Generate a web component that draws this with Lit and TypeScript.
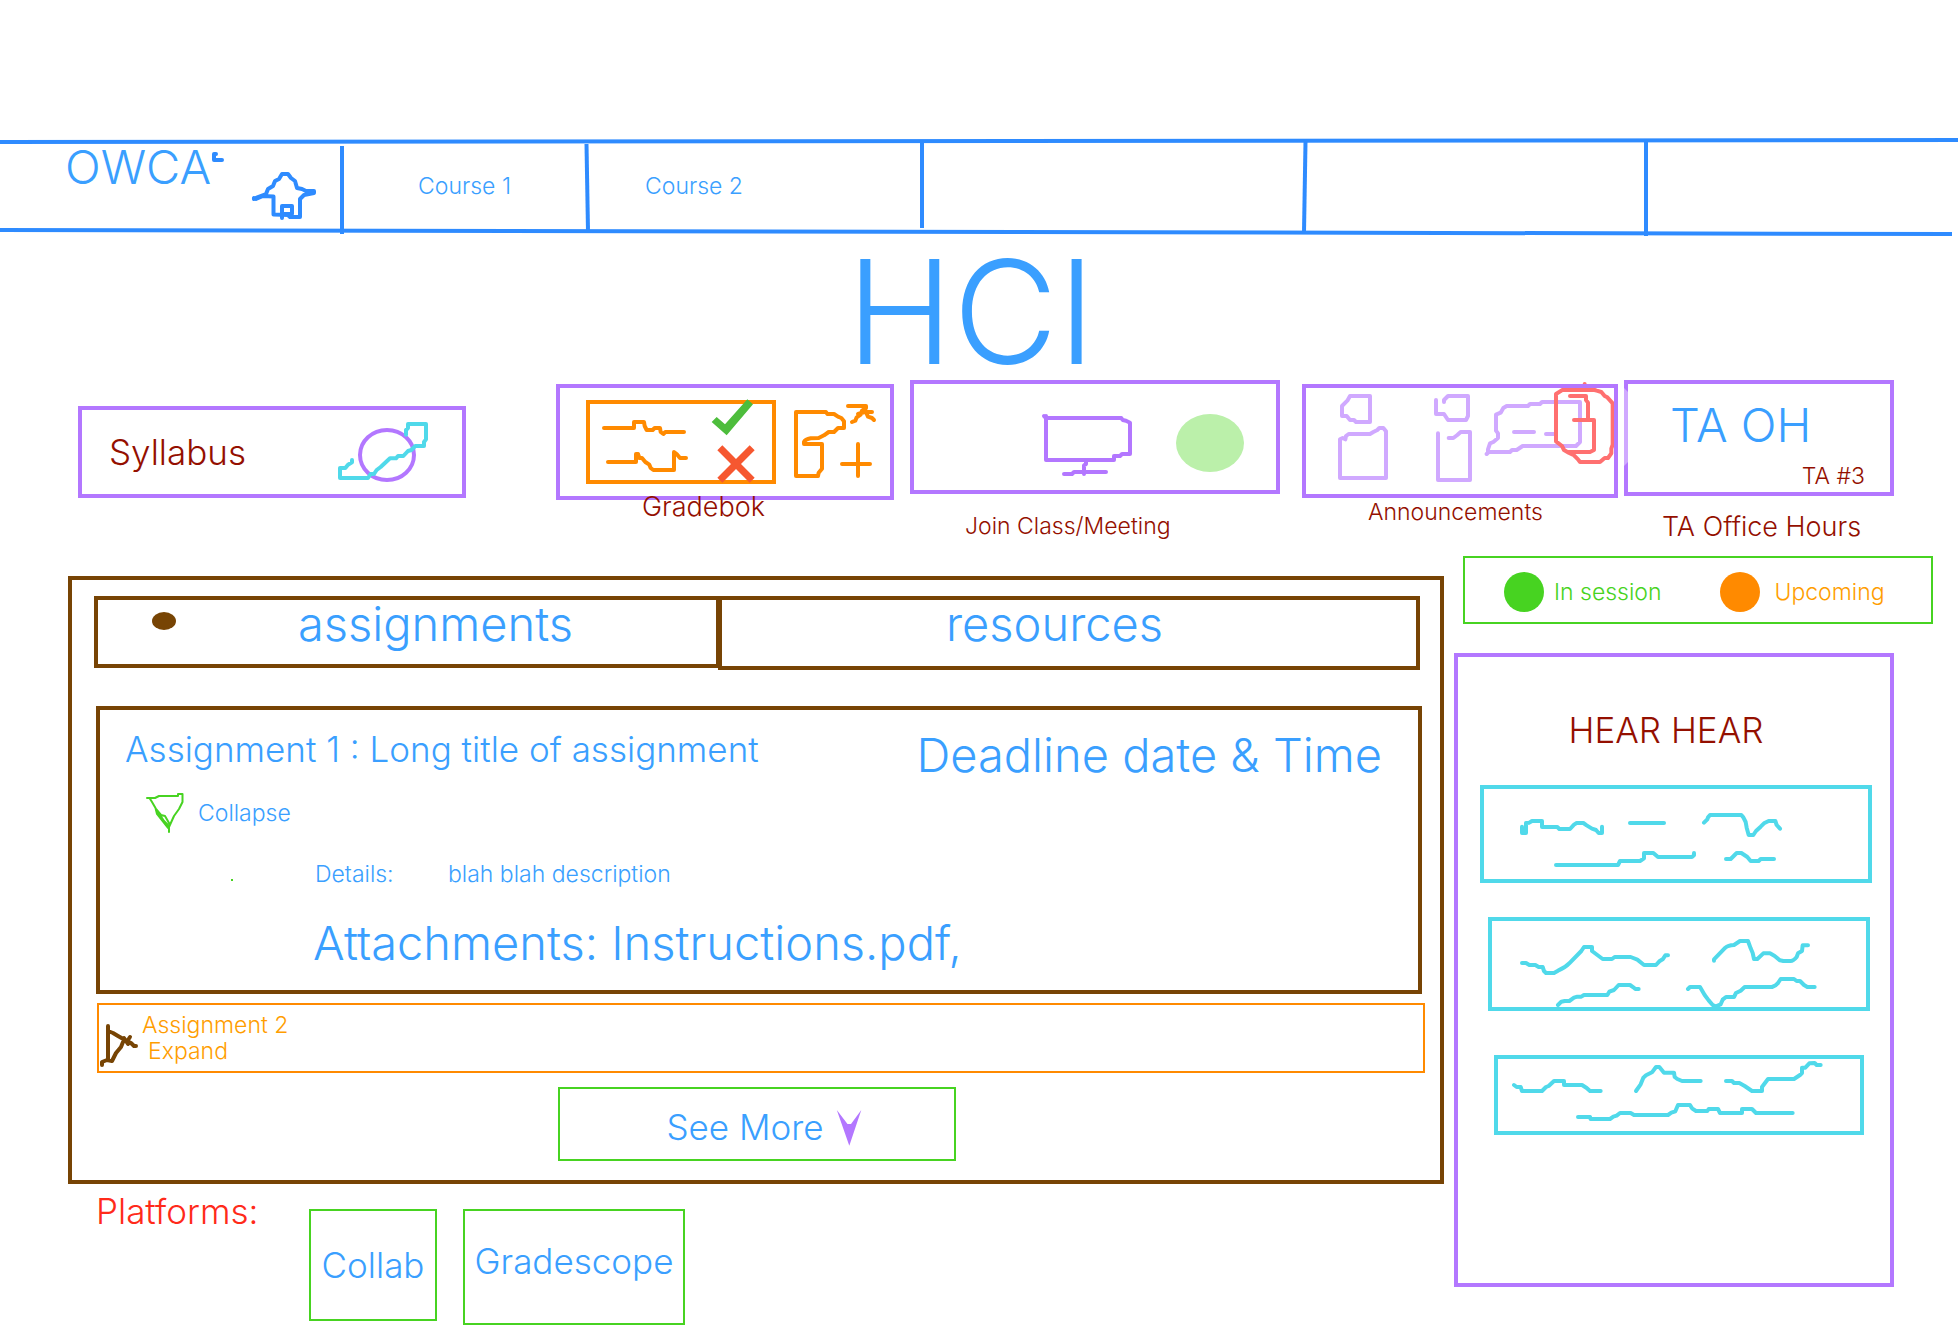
import { LitElement, html, css, svg } from 'lit';
import { customElement, state } from 'lit/decorators.js';

const notes = [
  {
    name: 'first',
    width: 384,
    height: 90,
    viewBox: '132 444 1152 270',
    paths: [
      'M246 557V576H258V546L268 545L276 540H306V558H352L358 564H390L402 551L410 546H430L440 553L456 563L468 567L476 576H486V557',
      'M570 546H672',
      'M792 545L802 535L804 529L810 522H904L910 529L917 543L920 560L926 582H940L948 570L962 557L972 547L986 540H1006L1010 552L1020 563',
      'M348 672H534L540 660H600L612 652V636H640L654 648H756L762 643V636',
      'M858 654H872L890 636H904L922 648L932 660H956L962 654H1002',
    ],
  },
  {
    name: 'second',
    width: 374,
    height: 86,
    viewBox: '156 840 1122 258',
    paths: [
      'M246 966H258L268 972H286L296 978H308L312 990L318 996H342L354 989Q376 980 390 965L424 930L432 918H456V930L472 942L488 954H516L524 948H572L592 956L612 972H648L658 961L668 955L676 943H684',
      'M822 959V955L856 920Q864 913 882 912L900 900H924L932 922L938 936L942 954H952L970 937H990L1004 945L1020 958L1030 960H1052Q1060 960 1070 948L1074 937L1086 930L1088 913H1104',
      'M354 1092L364 1082L374 1080H388L402 1070L412 1067H424L432 1062H502L508 1052L522 1047L536 1032H570L580 1039L586 1044H596',
      'M744 1044L750 1038H780L794 1062L806 1078L818 1092L828 1096L842 1090L848 1076L858 1068H882L888 1056L902 1049L914 1038H996Q1008 1034 1014 1026L1022 1014H1062L1070 1020H1080L1092 1032L1102 1038H1124',
    ],
  },
  {
    name: 'third',
    width: 362,
    height: 72,
    viewBox: '174 234 1086 216',
    paths: [
      'M222 312L230 318H242L246 330H306L318 318L326 315L342 300H372V312H426L440 321L450 330H482',
      'M588 330L602 310L610 290L618 283L636 274L648 258H658L672 275H702L704 288L712 294L726 300H782',
      'M858 300H876L882 306H898L914 315L936 330H966V318L984 294H1062L1080 282L1086 276V260H1096L1108 247L1124 246L1130 252H1142',
      'M414 408H450L452 414H510L520 407L530 404L540 396H572L582 402H684L694 395L706 391L714 372H750L756 382L768 390H802L806 384H834L840 396H906V384H936L948 396H1058',
    ],
  },
];

@customElement('app-root')
export class AppRoot extends LitElement {
  static styles = css`
    :host {
      display: block;
      background: #fff;
      color: #3a9fff;
      font: 300 23px/28px Inter, 'Liberation Sans', sans-serif;
      --blue: #2e8bff;
      --purple: #b377ff;
      --maroon: #940f00;
      --orange: #ff8a00;
      --green: #47d321;
      --brown: #774404;
      --cyan: #50d9ea;
    }
    * { box-sizing: border-box; }
    a { color: inherit; text-decoration: none; }
    button {
      font: inherit;
      color: inherit;
      background: none;
      border: 0;
      padding: 0;
      margin: 0;
      text-align: left;
      cursor: pointer;
    }
    svg {
      display: block;
      flex: none;
      fill: none;
      stroke-linecap: round;
      stroke-linejoin: round;
    }
    h1, h2, h3, p, ul { margin: 0; padding: 0; font-weight: 300; }
    ul { list-style: none; }

    .top { padding-top: 138px; }
    .nav {
      position: relative;
      display: grid;
      grid-template-columns: 342fr 245fr 334fr 384fr 341fr 312fr;
      height: 100px;
    }
    .rules {
      position: absolute;
      inset: 0;
      width: 100%;
      height: 100%;
      stroke: var(--blue);
      stroke-width: 4;
      stroke-linecap: butt;
      pointer-events: none;
    }
    .rules path { vector-effect: non-scaling-stroke; }
    .home {
      display: flex;
      justify-content: space-between;
      padding: 1px 20px 0 65px;
      font-size: 47px;
      line-height: 56px;
    }
    .home svg { margin: 11px 0 0 -8px; stroke: var(--blue); stroke-width: 4; }
    .course { padding-top: 34px; }
    .first { text-align: center; }
    .second { padding-left: 58px; }

    .title {
      margin-top: 8px;
      padding: 0 16px 2px 0;
      text-align: center;
      font-size: 144px;
      line-height: 132px;
    }

    .cards {
      display: flex;
      align-items: flex-start;
      padding: 0 64px 13px 78px;
      color: var(--maroon);
    }
    .tile { display: block; min-width: 0; }
    .box {
      position: relative;
      display: flex;
      justify-content: center;
      border: 4px solid var(--purple);
    }
    .box svg { stroke-width: 12; }
    .syllabus { flex: 388 1 0; margin-top: 26px; }
    .syllabus .box {
      justify-content: space-between;
      align-items: center;
      padding: 0 28px 0 27px;
      font-size: 35px;
      line-height: 40px;
    }
    .gradebook { flex: 338 1 0; margin: 4px 0 0 90px; }
    .gradebook .label { margin-top: -9px; padding-left: 86px; }
    .meeting { flex: 370 1 0; margin-left: 16px; }
    .meeting .label { margin-top: 18px; padding-left: 55px; }
    .news { flex: 316 1 0; margin: 4px 0 0 22px; }
    .news .label { padding-left: 66px; }
    .news svg { overflow: visible; }
    .office { flex: 270 1 0; margin-left: 6px; }
    .office .label { margin-top: 15px; padding-left: 38px; }
    .office .box { display: block; padding: 13px 25px 2px 42px; }
    .office .box::before {
      content: '';
      position: absolute;
      left: -4px;
      top: 4px;
      width: 4px;
      height: 78px;
      background: #d0a9ff;
      clip-path: polygon(0 0, 100% 4px, 100% 74px, 0 100%);
    }
    .label { position: relative; white-space: nowrap; }
    .large { font-size: 27px; line-height: 32px; }
    .oh { display: block; color: #3a9fff; font-size: 47px; line-height: 56px; }
    .ta { display: block; margin-top: 9px; text-align: right; }

    .body {
      display: grid;
      grid-template-columns: 1376fr 479fr;
      gap: 10px;
      align-items: start;
      padding: 0 25px 16px 68px;
    }
    .work {
      margin-top: 20px;
      padding: 16px 20px 19px 22px;
      border: 4px solid var(--brown);
    }
    .tabs {
      display: grid;
      grid-template-columns: 624fr 702fr;
      align-items: start;
    }
    .tab {
      display: flex;
      align-items: flex-start;
      border: 4px solid var(--brown);
      font-size: 47px;
      line-height: 48px;
    }
    .tab-a { gap: 122px; margin-right: -2px; padding: 0 0 16px 54px; }
    .tab-r { padding: 0 0 18px 224px; }
    .mark {
      width: 24px;
      height: 18px;
      margin-top: 12px;
      border-radius: 50%;
      background: var(--brown);
    }
    .assignment {
      margin: 36px -2px 0 2px;
      padding: 17px 36px 19px 25px;
      border: 4px solid var(--brown);
    }
    .heading { display: flex; justify-content: space-between; align-items: flex-start; }
    .heading h2 { margin-top: 2px; font-size: 35px; line-height: 40px; }
    .big { font-size: 47px; line-height: 56px; }
    .collapse {
      display: flex;
      align-items: center;
      gap: 10px;
      margin: 8px 0 0 19px;
    }
    .collapse svg { stroke: var(--green); stroke-width: 2; }
    .details { display: flex; margin: 25px 0 0 106px; }
    .speck { width: 2px; height: 2px; margin: 19px 82px 0 0; background: var(--green); }
    .term { width: 133px; }
    .files { margin: 27px 0 0 188px; }
    .next {
      display: flex;
      align-items: flex-end;
      width: calc(100% + 2px);
      margin: 9px -5px 0 3px;
      border: 2px solid var(--orange);
      color: #ff9d00;
      line-height: 26px;
    }
    .next svg { stroke: var(--brown); stroke-width: 4; }
    .next-text { padding: 7px 0 7px 1px; }
    .next-text span { display: block; }
    .next-text .expand { padding-left: 6px; }
    .more {
      display: flex;
      justify-content: center;
      gap: 12px;
      width: 30%;
      margin: 14px auto 0;
      padding: 18px 0 12px 14px;
      border: 2px solid var(--green);
      font-size: 35px;
      line-height: 40px;
    }
    .more svg { margin-top: 3px; fill: var(--purple); }

    .platforms {
      display: flex;
      align-items: flex-start;
      margin-left: 28px;
      font-size: 35px;
      line-height: 40px;
    }
    .platforms h2 {
      width: 213px;
      margin-top: 7px;
      color: #ff2a1a;
      font-size: 35px;
    }
    .platform {
      margin: 25px 26px 0 0;
      border: 2px solid var(--green);
      text-align: center;
    }
    .collab { min-width: 128px; padding: 34px 8px; }
    .gradescope { min-width: 222px; padding: 30px 8px 42px; }

    .legend {
      display: grid;
      grid-template-columns: 217fr 211fr;
      margin-left: 9px;
      padding: 14px 0 10px 39px;
      border: 2px solid var(--green);
    }
    .legend li { display: flex; align-items: center; gap: 10px; }
    .dot { width: 40px; height: 40px; border-radius: 50%; background: currentColor; }
    .live { color: var(--green); }
    .soon { color: var(--orange); }
    .soon-text { padding-left: 4px; color: #ff9d00; }
    .hear {
      margin: 29px 39px 0 0;
      padding: 53px 18px 148px 22px;
      border: 4px solid var(--purple);
    }
    .hear h2 {
      padding-right: 20px;
      text-align: center;
      color: var(--maroon);
      font-size: 35px;
      line-height: 40px;
    }
    .note {
      display: flex;
      justify-content: center;
      border: 4px solid var(--cyan);
    }
    .note svg { stroke: var(--cyan); stroke-width: 12; }
    .note-first { margin-top: 35px; }
    .note-second { margin: 34px 2px 0 8px; }
    .note-third { margin: 44px 8px 0 14px; }
  `;

  @state() private tab = 'assignments';

  private renderNav() {
    return html`
      <header class="top">
        <nav class="nav" aria-label="Courses">
          <svg class="rules" viewBox="0 0 1958 100" preserveAspectRatio="none" aria-hidden="true">
            <path d="M0 4L1958 2" />
            <path d="M0 92L1952 96" />
            <path d="M342 8V96" />
            <path d="M586.500 6L588 93" />
            <path d="M922 4V90" />
            <path d="M1305.500 4L1304 94" />
            <path d="M1646 4V98" />
          </svg>
          <a class="home" href="#home">
            OWCA
            <svg width="114" height="72" viewBox="208 150 114 72" aria-hidden="true">
              <path d="M216 154H214V160H222" />
              <path d="M254 199L258 197L266 194L268 189L273 186L275 181L279 179L282 174H288L291 178L295 181L297 188L302 189L306 191L314 191V193L304 195L300 199V217H290L288 215L273.500 214.500V196.500L263 196L256 199L254 198" />
              <path d="M282 218V206H292V214H283" />
            </svg>
          </a>
          <a class="course first" href="#course-1">Course 1</a>
          <a class="course second" href="#course-2">Course 2</a>
        </nav>
      </header>
    `;
  }

  private renderCards() {
    return html`
      <section class="cards">
        <a class="tile syllabus" href="#syllabus">
          <span class="box">
            Syllabus
            <svg width="100" height="84" viewBox="822 120 300 252" aria-hidden="true">
              <ellipse cx="981" cy="255" rx="81" ry="75" stroke="#b377ff" />
              <path
                stroke="#50d9ea"
                d="M876 270V277L864 284L856 294H840V324H924L932 312H942L950 300L962 291L990 265H1008L1014 258H1030L1044 243L1054 240L1066 228H1092V216L1098 208V162H1044V174L1038 180V194"
              />
            </svg>
          </span>
        </a>
        <a class="tile gradebook" href="#gradebook">
          <span class="box">
            <svg width="330" height="108" viewBox="60 54 990 324" aria-hidden="true">
              <g stroke="#ff8a00">
                <path stroke-linejoin="miter" d="M144 96H702V336H144Z" />
                <path d="M192 174H282V156H312L314 168L320 180H338L344 174H360L362 186L370 192L376 186H432" />
                <path d="M204 276H288V252H294L298 264H306L316 276L328 284L332 294L340 300H402V246L410 252L420 264H438" />
                <path d="M792 222H846V296L836 308L834 318H768V126H858L862 132H882L894 140L904 144L912 154V174H894L882 186H866L852 196L836 204L812 205Q796 208 792 216Z" />
                <path d="M924 108H978V114L966 122L962 134L950 142L946 152L936 156M954 132L974 126H996M976 122L984 140L996 144L1002 150" />
                <path d="M954 222V318M906 282H990" />
              </g>
              <path fill="#4dbd3c" d="M515 156L530 141L555 163L622 88L639 103L560 196Z" />
              <path fill="#f65730" d="M532 241L547 226L588 267L629 226L644 241L603 282L644 323L629 338L588 297L547 338L532 323L573 282Z" />
            </svg>
          </span>
          <span class="tile label large">Gradebok</span>
        </a>
        <a class="tile meeting" href="#meeting">
          <span class="box">
            <svg width="362" height="106" viewBox="42 42 1086 318" aria-hidden="true">
              <g stroke="#b377ff">
                <path d="M432 138L438 144H664L668 150L678 152L690 158V252H666L660 258H642V270H438V138" />
                <path d="M558 274V282L552 286V312M492 312H516L522 306H618" />
              </g>
              <ellipse cx="930" cy="219" rx="102" ry="87" fill="#bbf0aa" />
            </svg>
          </span>
          <span class="tile label">Join Class/Meeting</span>
        </a>
        <a class="tile news" href="#announcements">
          <span class="box">
            <svg width="308" height="106" viewBox="48 54 924 318" aria-hidden="true">
              <g stroke="#d0a9ff">
                <path d="M240 78V156H198L192 150H180L170 138H156V108L172 92L180 78Z" />
                <path d="M150 324V208L158 204L166 208L168 198L176 192H240L250 186L262 180L268 174H280L288 184V324Z" />
                <path d="M438 90V132H462L474 150H528L534 138V78H474L462 90V96" />
                <path d="M444 190V330H540V186H512L502 195L490 204H476" />
                <path d="M590 252L596 246H660L666 240H680L698 228H858L870 216V96H756L750 102H720L714 108H650L640 114L632 128L618 134V182L624 190V204L610 216L600 220L594 238V246" />
                <path d="M672 186H732M768 192H798" />
              </g>
              <path
                stroke="#ff7070"
                d="M840 78H888V90L894 98V150M852 150H912V240L900 246H836M884 42V48M820 60H914L920 62L934 66L944 78L952 82L968 100V224L964 236V250L954 264H944L930 276H870L864 268L852 256L836 248L822 240L816 228L798 214V72L820 58"
              />
              <path stroke="#b377ff" stroke-linejoin="miter" d="M42 48H978V378H42Z" />
            </svg>
          </span>
          <span class="tile label">Announcements</span>
        </a>
        <a class="tile office" href="#office-hours">
          <span class="box">
            <span class="oh">TA OH</span>
            <span class="ta">TA #3</span>
          </span>
          <span class="tile label large">TA Office Hours</span>
        </a>
      </section>
    `;
  }

  private renderWork() {
    const select = (name: string) => () => (this.tab = name);
    return html`
      <section class="work">
        <div class="tabs" role="tablist">
          <button class="tab tab-a" role="tab" aria-selected=${this.tab === 'assignments'} @click=${select('assignments')}>
            <span class="mark"></span>assignments
          </button>
          <button class="tab tab-r" role="tab" aria-selected=${this.tab === 'resources'} @click=${select('resources')}>
            resources
          </button>
        </div>
        <article class="assignment">
          <div class="heading">
            <h2>Assignment 1 : Long title of assignment</h2>
            <p class="big">Deadline date &amp; Time</p>
          </div>
          <button class="collapse">
            <svg width="44" height="44" viewBox="144 791 44 44" aria-hidden="true">
              <path d="M147 798H155L159 796H178V794H182.500V802L179 809L174 816L169 827V832M168 828L157 814L155.500 808L152 802L149.500 798M156 809L161 815L165 816L169 823M158 812L164 821L169 826" />
            </svg>
            Collapse
          </button>
          <div class="details">
            <span class="speck"></span>
            <span class="term">Details:</span>
            <span>blah blah description</span>
          </div>
          <p class="files big">Attachments: <a href="#instructions">Instructions.pdf</a>,</p>
        </article>
        <button class="next">
          <svg width="42" height="50" viewBox="99 1021 42 50" aria-hidden="true">
            <path d="M108 1026V1060M102 1065V1062L107 1060L112 1061L116 1053L121 1047L123 1042L128 1040L130 1037M108 1031L113 1033L118 1036L125 1040L131 1043L134 1046H136M124 1038L128 1044" />
          </svg>
          <span class="next-text">
            <span>Assignment 2</span>
            <span class="expand">Expand</span>
          </span>
        </button>
        <button class="more">
          See More
          <svg width="26" height="36" viewBox="835 1110 26 36" aria-hidden="true">
            <path d="M835.800 1110L846.500 1124H850L860.300 1110L848.300 1145.700Z" />
          </svg>
        </button>
      </section>
    `;
  }

  render() {
    return html`
      ${this.renderNav()}
      <main>
        <h1 class="title">HCI</h1>
        ${this.renderCards()}
        <div class="body">
          <div>
            ${this.renderWork()}
            <section class="platforms">
              <h2>Platforms:</h2>
              <a class="platform collab" href="#collab">Collab</a>
              <a class="platform gradescope" href="#gradescope">Gradescope</a>
            </section>
          </div>
          <aside>
            <ul class="legend">
              <li class="live"><span class="dot"></span>In session</li>
              <li class="soon"><span class="dot"></span><span class="soon-text">Upcoming</span></li>
            </ul>
            <section class="hear">
              <h2>HEAR HEAR</h2>
              ${notes.map(
                (n) => html`
                  <article class="note note-${n.name}">
                    <svg width=${n.width} height=${n.height} viewBox=${n.viewBox} aria-hidden="true">
                      ${n.paths.map((d) => svg`<path d=${d} />`)}
                    </svg>
                  </article>
                `,
              )}
            </section>
          </aside>
        </div>
      </main>
    `;
  }
}
